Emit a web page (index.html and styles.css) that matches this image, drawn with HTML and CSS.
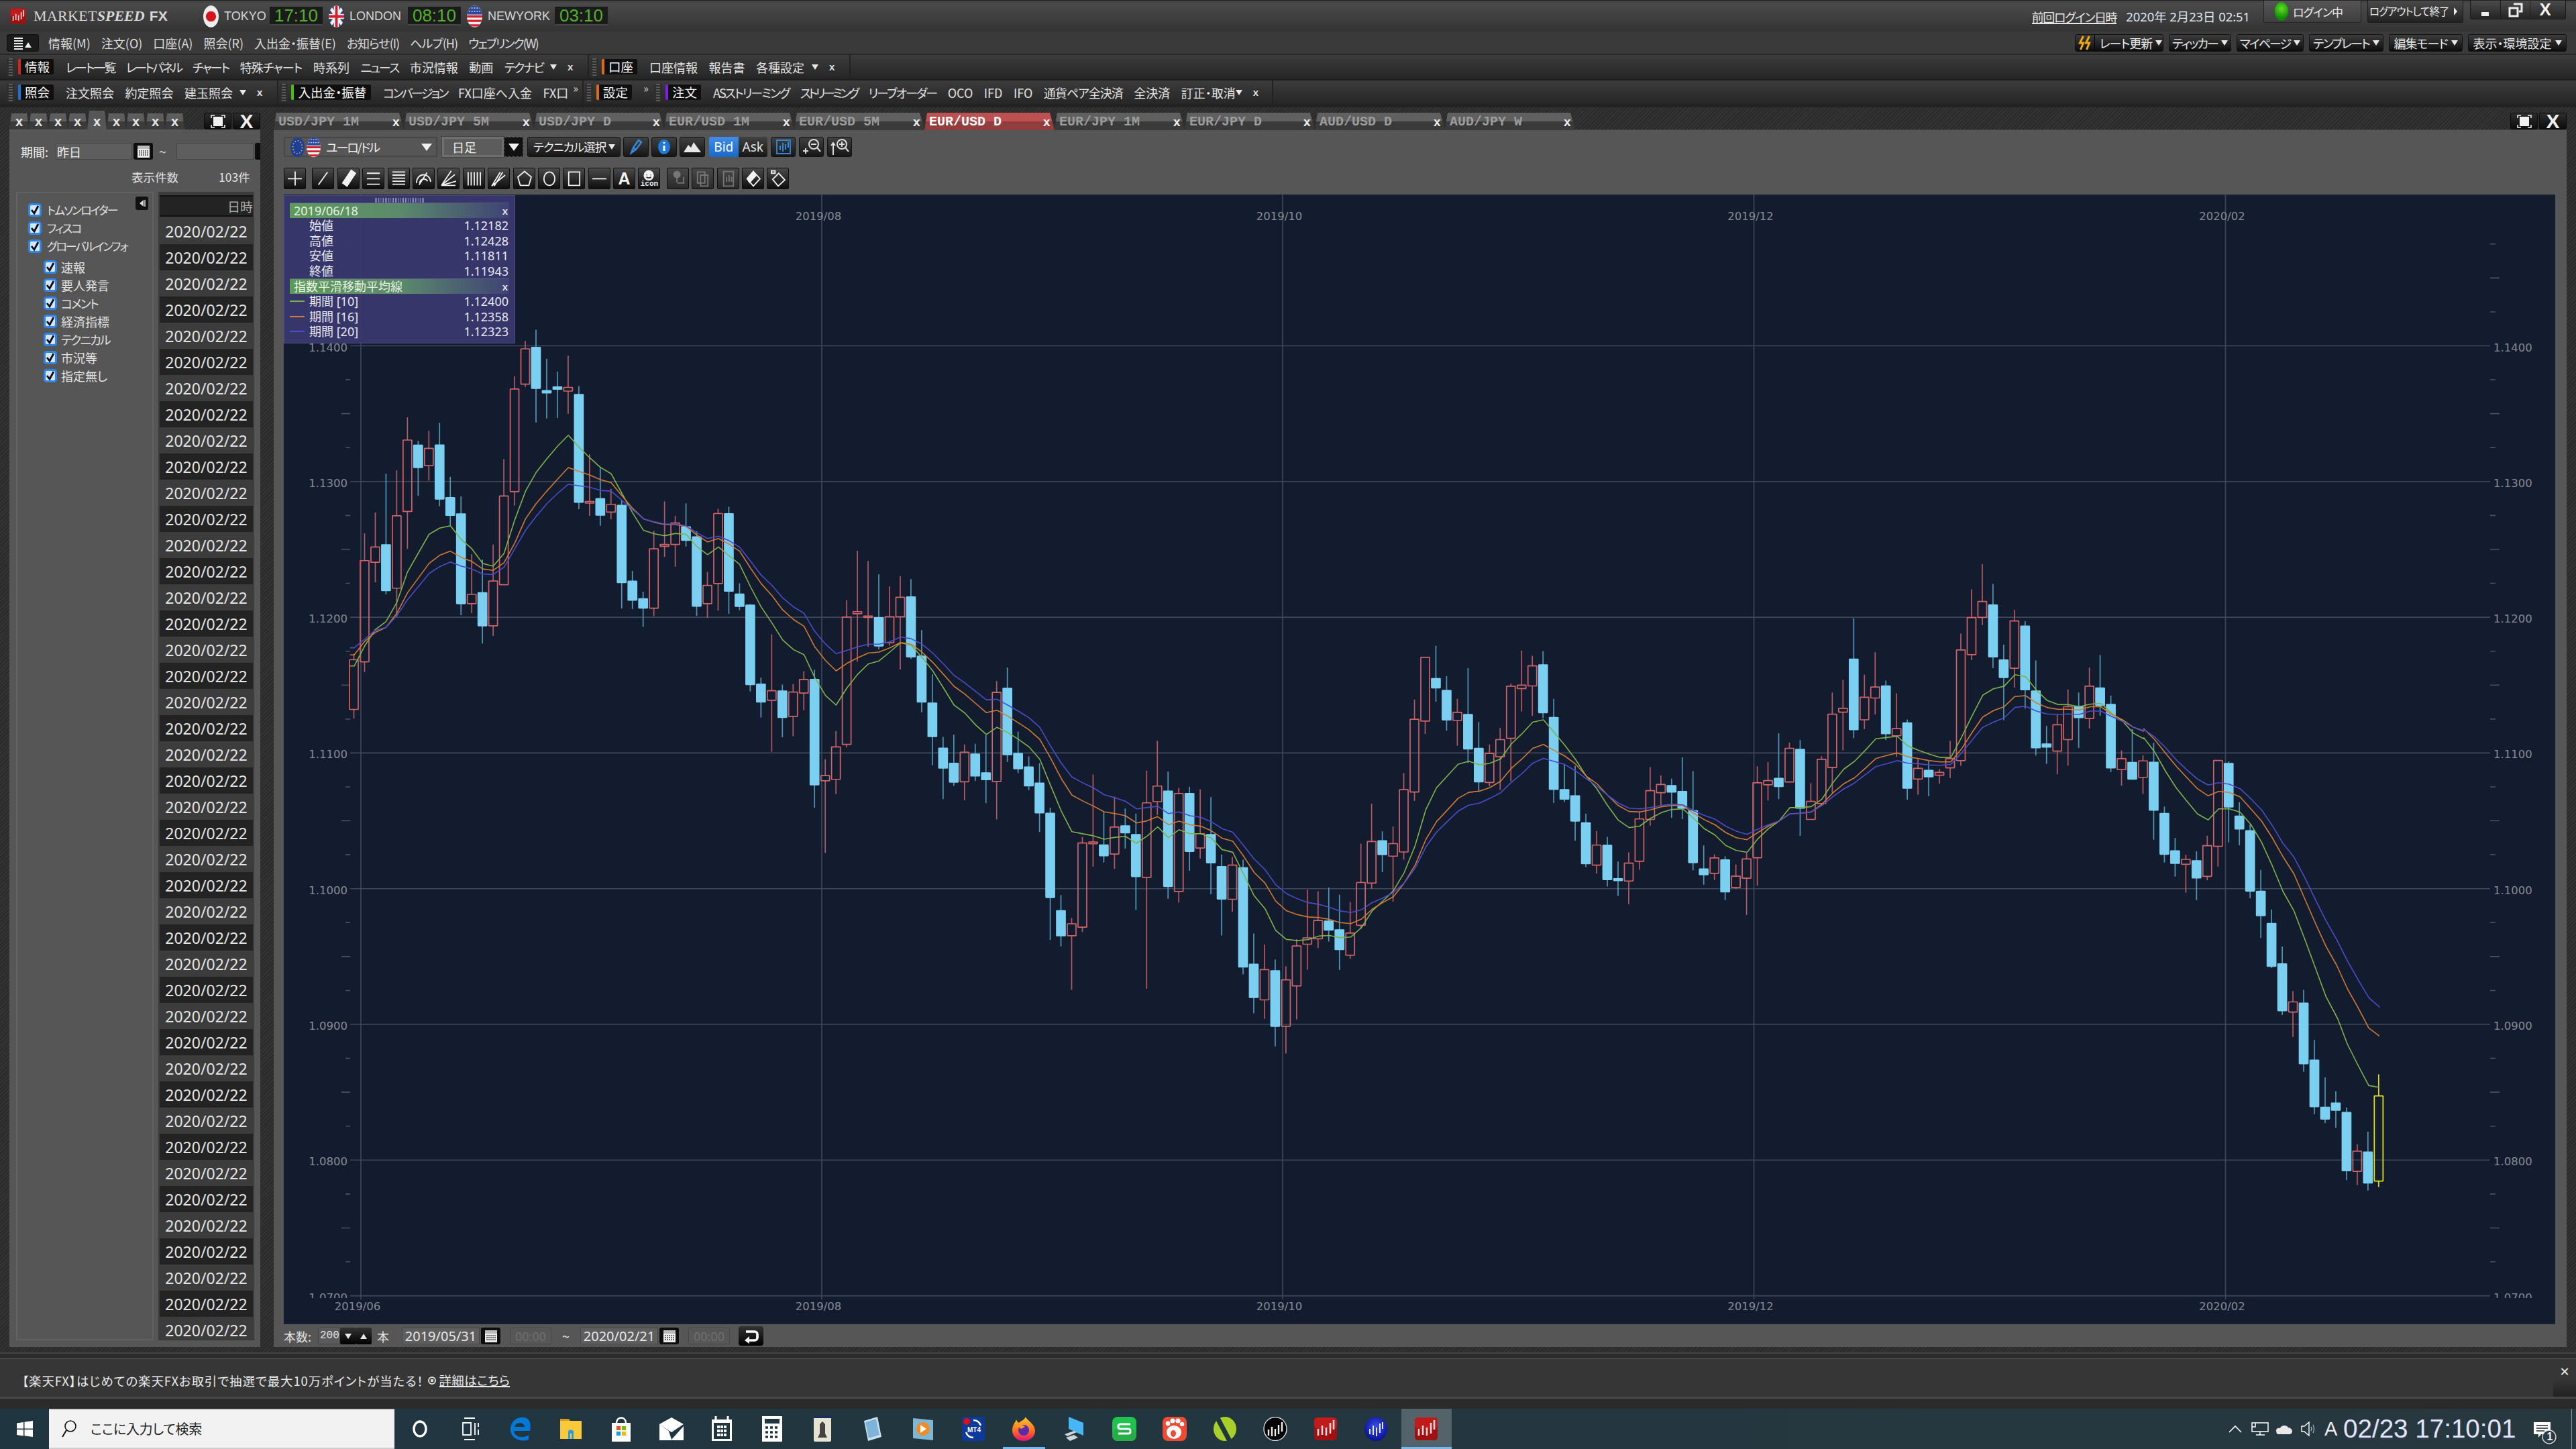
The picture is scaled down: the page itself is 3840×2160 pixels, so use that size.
FILE: index.html
```html
<!DOCTYPE html>
<html lang="ja">
<head>
<meta charset="utf-8">
<title>MARKETSPEED FX</title>
<link rel="stylesheet" href="styles.css">
</head>
<body>
<svg class="defs" width="0" height="0">
  <defs>
    <clipPath id="ov"><ellipse cx="12" cy="17" rx="12" ry="17"/></clipPath>
    <symbol id="f-jp" viewBox="0 0 24 34"><ellipse cx="12" cy="17" rx="12" ry="17" fill="#eee"/><circle cx="12" cy="17" r="8" fill="#d5141c"/></symbol>
    <symbol id="f-uk" viewBox="0 0 24 34"><g clip-path="url(#ov)"><rect width="24" height="34" fill="#243f8f"/><path d="M0 0L24 34M24 0L0 34" stroke="#eee" stroke-width="5"/><path d="M12 0V34M0 17H24" stroke="#eee" stroke-width="8"/><path d="M12 0V34M0 17H24" stroke="#d0202c" stroke-width="4"/></g></symbol>
    <symbol id="f-us" viewBox="0 0 24 34"><g clip-path="url(#ov)"><rect width="24" height="34" fill="#eee"/><path d="M0 3H24M0 10H24M0 17H24M0 24H24M0 31H24" stroke="#d0202c" stroke-width="3.4"/><rect width="24" height="14" fill="#2c4a9c"/><path d="M3 4h18M3 9h18" stroke="#dde" stroke-width="1.5" stroke-dasharray="2 2"/></g></symbol>
    <symbol id="f-eu" viewBox="0 0 24 34"><ellipse cx="12" cy="17" rx="12" ry="17" fill="#1d3f96"/><ellipse cx="12" cy="17" rx="8" ry="11" fill="none" stroke="#e8c820" stroke-width="2" stroke-dasharray="1.6 3.4"/></symbol>
    <symbol id="chk" viewBox="0 0 20 20"><rect x="1.5" y="1.5" width="17" height="17" rx="3" fill="#d3e6fa" stroke="#2f86e8" stroke-width="3"/><path d="M5 10l4 5 6-11" fill="none" stroke="#0a0a14" stroke-width="2.8"/></symbol>
    <symbol id="cal" viewBox="0 0 24 24"><rect x="3" y="3" width="18" height="18" fill="#eee"/><rect x="3" y="3" width="18" height="5" fill="#bbb"/><path d="M5 11h14M5 14h14M5 17h14" stroke="#444" stroke-width="1.6" stroke-dasharray="2 1"/></symbol>
    <symbol id="mx" viewBox="0 0 30 22"><path d="M5 6V2h5M20 2h5v4M25 16v4h-5M10 20H5v-4" fill="none" stroke="#eee" stroke-width="1.6"/><rect x="8" y="4" width="14" height="14" fill="#f0f0f0"/></symbol>
    <symbol id="rc" viewBox="0 0 36 36"><rect x="1" y="1" width="34" height="34" rx="5" fill="#a01010"/><rect x="1" y="1" width="34" height="17" rx="5" fill="#c01a1a"/><path d="M7 18v10M13 13v14M19 16v12M25 9v16M30 5v14" stroke="#f2d8d8" stroke-width="2.6"/></symbol>
  </defs>
</svg>

<div class="app">
  <header class="titlebar">
    <svg class="logo" viewBox="0 0 36 36"><use href="#rc"/></svg>
    <div class="brand"><span>MARKET</span><em>SPEED</em><b>FX</b></div>
    <svg class="flag first"><use href="#f-jp"/></svg><span class="city w-t">TOKYO</span><span class="lcd">17:10</span>
    <svg class="flag"><use href="#f-uk"/></svg><span class="city w-l">LONDON</span><span class="lcd">08:10</span>
    <svg class="flag"><use href="#f-us"/></svg><span class="city w-n">NEWYORK</span><span class="lcd">03:10</span>
    <div class="title-right">
      <a class="last-login">前回ログイン日時</a>
      <span class="last-date">2020年 2月23日 02:51</span>
      <div class="login-pill"><i class="led"></i><span>ログイン中</span></div>
      <div class="logout"><span>ログアウトして終了</span><i class="arr-r"></i></div>
      <div class="winbtns">
        <span class="wb"><i class="wb-min"></i></span>
        <span class="wb"><svg width="24" height="24" viewBox="0 0 24 24"><path d="M9 3h12v11h-4M3 9h12v12H3z" fill="none" stroke="#eee" stroke-width="3"/></svg></span>
        <span class="wb wb-x">X</span>
      </div>
    </div>
  </header>

  <nav class="menubar">
    <span class="menu-ico"><svg width="30" height="20" viewBox="0 0 30 20"><path d="M2 3h13M2 7h13M2 11h13M2 15h13M2 19h13" stroke="#eee" stroke-width="1.8"/><path d="M18 17l5-8 5 8z" fill="#eee"/></svg></span>
    <span class="mi">情報(M)</span><span class="mi">注文(O)</span><span class="mi">口座(A)</span><span class="mi">照会(R)</span><span class="mi">入出金・振替(E)</span><span class="mi k1">お知らせ(I)</span><span class="mi k1">ヘルプ(H)</span><span class="mi k2">ウェブリンク(W)</span>
    <div class="menu-right">
      <span class="rbtn"><svg class="bolt" width="22" height="24" viewBox="0 0 22 24"><path d="M8 2L3 12l5 0-4 10M17 2l-5 10 5 0-4 10" fill="none" stroke="#f0a814" stroke-width="3"/></svg><span class="k1">レート更新</span><i class="tri"></i></span>
      <span class="rbtn"><span class="k2">ティッカー</span><i class="tri"></i></span>
      <span class="rbtn"><span class="k2">マイページ</span><i class="tri"></i></span>
      <span class="rbtn"><span class="k2">テンプレート</span><i class="tri"></i></span>
      <span class="rbtn"><span class="k1">編集モード</span><i class="tri"></i></span>
      <span class="rbtn"><span>表示・環境設定</span><i class="tri"></i></span>
    </div>
  </nav>

  <div class="toolbar tb1">
    <div class="tg g-info"><i class="grip"></i><span class="badge red">情報</span><div class="items"><span class="k2">レート一覧</span><span class="k3">レートパネル</span><span class="k2">チャート</span><span class="k1">特殊チャート</span><span>時系列</span><span class="k2">ニュース</span><span>市況情報</span><span>動画</span><span class="k2">テクナビ</span></div><i class="tri end"></i><span class="tx">x</span></div>
    <div class="tg g-acct"><i class="grip"></i><span class="badge orange">口座</span><div class="items"><span>口座情報</span><span>報告書</span><span>各種設定</span></div><i class="tri end"></i><span class="tx">x</span></div>
  </div>
  <div class="toolbar tb2">
    <div class="tg g-q"><i class="grip"></i><span class="badge blue">照会</span><div class="items"><span>注文照会</span><span>約定照会</span><span>建玉照会</span></div><i class="tri end"></i><span class="tx">x</span></div>
    <div class="tg g-dep"><i class="grip"></i><span class="badge green wide">入出金・振替</span><div class="items"><span class="k3">コンバージョン</span><span>FX口座へ入金</span><span>FX口</span></div><span class="more">»</span></div>
    <div class="tg g-set"><i class="grip"></i><span class="badge orange">設定</span><span class="more">»</span></div>
    <div class="tg g-ord"><i class="grip"></i><span class="badge purple">注文</span><div class="items"><span class="k2">ASストリーミング</span><span class="k4">ストリーミング</span><span class="k2">リーブオーダー</span><span>OCO</span><span>IFD</span><span>IFO</span><span class="k1">通貨ペア全決済</span><span>全決済</span><span>訂正・取消</span></div><i class="tri end"></i><span class="tx">x</span></div>
  </div>

  <main class="workspace">
    <section class="left">
      <div class="tabrow">
        <div class="mtabs"><span>x</span><span>x</span><span>x</span><span>x</span><span class="on">x</span><span>x</span><span>x</span><span>x</span><span>x</span></div>
        <div class="wctl"><span><svg width="30" height="22"><use href="#mx"/></svg></span><span class="wctl-x">X</span></div>
      </div>
      <div class="lbody">
        <div class="period">
          <label>期間:</label><span class="input i1">昨日</span><span class="calbtn"><svg width="24" height="24"><use href="#cal"/></svg></span><span class="tilde">~</span><span class="input i2"></span><span class="calbtn cut"></span>
        </div>
        <div class="count"><span>表示件数</span><span class="num">103件</span></div>
        <div class="split">
          <div class="filter">
            <span class="collapse"><svg width="14" height="14" viewBox="0 0 14 14"><path d="M9 2L3 7l6 5z" fill="#ddd"/><path d="M11 2v10" stroke="#ddd" stroke-width="1.5"/></svg></span>
            <div class="ck"><svg><use href="#chk"/></svg><span class="k2">トムソンロイター</span></div>
            <div class="ck"><svg><use href="#chk"/></svg><span class="k2">フィスコ</span></div>
            <div class="ck"><svg><use href="#chk"/></svg><span class="k2">グローバルインフォ</span></div>
            <div class="subtree">
              <div class="ck sub"><svg><use href="#chk"/></svg><span>速報</span></div>
              <div class="ck sub"><svg><use href="#chk"/></svg><span>要人発言</span></div>
              <div class="ck sub"><svg><use href="#chk"/></svg><span class="k2">コメント</span></div>
              <div class="ck sub"><svg><use href="#chk"/></svg><span>経済指標</span></div>
              <div class="ck sub"><svg><use href="#chk"/></svg><span class="k2">テクニカル</span></div>
              <div class="ck sub"><svg><use href="#chk"/></svg><span>市況等</span></div>
              <div class="ck sub"><svg><use href="#chk"/></svg><span>指定無し</span></div>
            </div>
          </div>
          <div class="dates">
            <div class="dh">日時</div>
            <div>2020/02/22</div><div>2020/02/22</div><div>2020/02/22</div><div>2020/02/22</div><div>2020/02/22</div><div>2020/02/22</div><div>2020/02/22</div><div>2020/02/22</div><div>2020/02/22</div><div>2020/02/22</div><div>2020/02/22</div><div>2020/02/22</div><div>2020/02/22</div><div>2020/02/22</div><div>2020/02/22</div><div>2020/02/22</div><div>2020/02/22</div><div>2020/02/22</div><div>2020/02/22</div><div>2020/02/22</div><div>2020/02/22</div><div>2020/02/22</div><div>2020/02/22</div><div>2020/02/22</div><div>2020/02/22</div><div>2020/02/22</div><div>2020/02/22</div><div>2020/02/22</div><div>2020/02/22</div><div>2020/02/22</div><div>2020/02/22</div><div>2020/02/22</div><div>2020/02/22</div><div>2020/02/22</div><div>2020/02/22</div><div>2020/02/22</div><div>2020/02/22</div><div>2020/02/22</div><div>2020/02/22</div><div>2020/02/22</div><div>2020/02/22</div><div>2020/02/22</div><div>2020/02/22</div>
          </div>
        </div>
      </div>
    </section>

    <section class="right">
      <div class="tabrow">
        <div class="ctabs">
          <span><b>USD/JPY 1M</b><i>x</i></span><span><b>USD/JPY 5M</b><i>x</i></span><span><b>USD/JPY D</b><i>x</i></span><span><b>EUR/USD 1M</b><i>x</i></span><span><b>EUR/USD 5M</b><i>x</i></span><span class="on"><b>EUR/USD D</b><i>x</i></span><span><b>EUR/JPY 1M</b><i>x</i></span><span><b>EUR/JPY D</b><i>x</i></span><span><b>AUD/USD D</b><i>x</i></span><span><b>AUD/JPY W</b><i>x</i></span>
        </div>
        <div class="wctl"><span><svg width="30" height="22"><use href="#mx"/></svg></span><span class="wctl-x">X</span></div>
      </div>
      <div class="rbody">
        <div class="ctool">
          <div class="pair"><svg class="pf"><use href="#f-eu"/></svg><svg class="pf"><use href="#f-us"/></svg><span class="k2">ユーロ/ドル</span><i class="tri big"></i></div>
          <div class="span-sel"><span>日足</span></div><span class="span-dd"><i class="tri big"></i></span>
          <div class="tech"><span class="k1">テクニカル選択</span><i class="tri"></i></div>
          <span class="bt"><svg width="24" height="26" viewBox="0 0 24 26"><path d="M5 22l3-8L16 3l4 3-8 11zM8 14l4 3" fill="none" stroke="#3a8be0" stroke-width="2.4"/></svg></span>
          <span class="bt"><svg width="24" height="26" viewBox="0 0 24 26"><ellipse cx="12" cy="13" rx="9" ry="11" fill="#1d78d8"/><path d="M12 11v8M12 6v2" stroke="#fff" stroke-width="3"/></svg></span>
          <span class="bt"><svg width="30" height="24" viewBox="0 0 30 24"><path d="M2 20L9 9l4 4 4-8 5 7 6 8z" fill="#e8e8e8"/></svg></span>
          <span class="seg"><span class="bid">Bid</span><span class="ask">Ask</span></span>
          <span class="bt nar"><svg width="26" height="26" viewBox="0 0 26 26"><path d="M2 3h22M2 23h22M3 3v20M23 3v20" stroke="#2d8ae0" stroke-width="1.8" fill="none"/><path d="M8 18V11M12 20V7M16 17V9M20 14V5" stroke="#2d8ae0" stroke-width="2"/></svg></span>
          <span class="bt nar"><svg width="30" height="28" viewBox="0 0 30 28"><circle cx="18" cy="10" r="7" fill="none" stroke="#ddd" stroke-width="2"/><path d="M23 15l5 6M14 10h8M2 20h8M6 16v8" stroke="#ddd" stroke-width="2"/></svg></span>
          <span class="bt nar"><svg width="30" height="28" viewBox="0 0 30 28"><circle cx="18" cy="10" r="7" fill="none" stroke="#ddd" stroke-width="2"/><path d="M23 15l5 6M14 10h8M18 6v8M5 8v18M2 12l3-4 3 4" stroke="#ddd" stroke-width="2" fill="none"/></svg></span>
        </div>
        <div class="tools">
          <span class="tool"><svg viewBox="0 0 33 33"><path d="M17 5V28M5 17H28"/></svg></span>
          <span class="tool gapl"><svg viewBox="0 0 33 33"><path d="M9 27L24 6"/></svg></span>
          <span class="tool"><svg viewBox="0 0 33 33"><path d="M21 3l7 5-14 21-7-5z" class="f"/></svg></span>
          <span class="tool"><svg viewBox="0 0 33 33"><path d="M6 8H27M6 17H27M6 26H27"/></svg></span>
          <span class="tool"><svg viewBox="0 0 33 33"><path d="M6 6H27M6 11H27M6 16H27M6 21H27M6 26H27"/></svg></span>
          <span class="tool"><svg viewBox="0 0 33 33"><path d="M5 24A11 12 0 0 1 28 22M10 24A7 7 0 0 1 23 21M9 27L22 7"/></svg></span>
          <span class="tool"><svg viewBox="0 0 33 33"><path d="M5 28H28M5 28L27 10M5 28L21 4M5 28L29 21"/></svg></span>
          <span class="tool"><svg viewBox="0 0 33 33"><path d="M7 6V28M12 6V28M17 6V28M22 6V28M27 6V28"/></svg></span>
          <span class="tool"><svg viewBox="0 0 33 33"><path d="M5 29L19 6M5 29L27 11M9 29L23 6"/></svg></span>
          <span class="tool"><svg viewBox="0 0 33 33"><path d="M17 5L28 14 24 28H10L6 14Z"/></svg></span>
          <span class="tool"><svg viewBox="0 0 33 33"><ellipse cx="17" cy="17" rx="9" ry="11"/></svg></span>
          <span class="tool"><svg viewBox="0 0 33 33"><path d="M8 6H26V28H8Z"/></svg></span>
          <span class="tool"><svg viewBox="0 0 33 33"><path d="M5 17H28"/></svg></span>
          <span class="tool tool-a">A</span>
          <span class="tool tool-ic"><svg viewBox="0 0 33 20"><circle cx="16" cy="10" r="8" class="f"/><path d="M12 9h1M19 9h1M12 13q4 3 8 0" class="d"/></svg><small>icon</small></span>
          <span class="tool gapl dim"><svg viewBox="0 0 33 33"><circle cx="15" cy="10" r="5" class="f"/><path d="M15 15v8M26 14v10H16"/></svg></span>
          <span class="tool dim"><svg viewBox="0 0 33 33"><path d="M8 6h12v18H8zM13 11h12v18H13z"/></svg></span>
          <span class="tool dim"><svg viewBox="0 0 33 33"><path d="M9 5h16v24H9zM14 14v8M18 11v11M22 14v8"/></svg></span>
          <span class="tool"><svg viewBox="0 0 33 33"><path d="M17 5L28 17 17 29 7 17Z"/><path d="M7 17L17 5 22 11 11 23z" class="f"/></svg></span>
          <span class="tool"><svg viewBox="0 0 33 33"><path d="M18 8L28 19 17 29 8 18ZM6 4H12V8H6Z"/></svg></span>
        </div>

        <div class="chart">
          <svg id="chartSvg" class="chart-svg" viewBox="423 291 3386 1684" width="3386" height="1684"></svg>
          <div class="legend">
            <div class="lg-grip"></div>
            <div class="lg-head"><span>2019/06/18</span><i>x</i></div>
            <div class="lg-row"><i class="sw"></i><span>始値</span><b>1.12182</b></div>
            <div class="lg-row"><i class="sw"></i><span>高値</span><b>1.12428</b></div>
            <div class="lg-row"><i class="sw"></i><span>安値</span><b>1.11811</b></div>
            <div class="lg-row"><i class="sw"></i><span>終値</span><b>1.11943</b></div>
            <div class="lg-head"><span>指数平滑移動平均線</span><i>x</i></div>
            <div class="lg-row"><i class="sw g"></i><span>期間 [10]</span><b>1.12400</b></div>
            <div class="lg-row"><i class="sw o"></i><span>期間 [16]</span><b>1.12358</b></div>
            <div class="lg-row"><i class="sw b"></i><span>期間 [20]</span><b>1.12323</b></div>
          </div>
        </div>

        <div class="cfoot">
          <span class="cf-l">本数:</span>
          <span class="cf-n">200</span><span class="cf-ud"><i class="tri"></i></span><span class="cf-ud"><i class="tri up"></i></span>
          <span class="cf-h">本</span>
          <span class="cf-d">2019/05/31</span><span class="calbtn sm"><svg width="24" height="24"><use href="#cal"/></svg></span>
          <span class="cf-t">00:00</span>
          <span class="cf-til">~</span>
          <span class="cf-d">2020/02/21</span><span class="calbtn sm"><svg width="24" height="24"><use href="#cal"/></svg></span>
          <span class="cf-t">00:00</span>
          <span class="cf-back"><svg width="26" height="26" viewBox="0 0 26 26"><path d="M5 6h13a4 4 0 0 1 4 4v5a4 4 0 0 1-4 4H7" fill="none" stroke="#fff" stroke-width="3.6"/><path d="M10 13l-7 6 7 5z" fill="#fff"/></svg></span>
        </div>
      </div>
    </section>
  </main>

  <footer class="news">
    <div class="news-main"><span class="news-txt">【楽天FX】はじめての楽天FXお取引で抽選で最大10万ポイントが当たる！</span><svg class="news-ico" width="14" height="16" viewBox="0 0 14 16"><rect x="2" y="3" width="10" height="10" rx="5" fill="none" stroke="#ddd" stroke-width="2"/><rect x="5" y="6" width="4" height="4" fill="#ddd"/></svg><a>詳細はこちら</a></div>
    <div class="news-x">✕</div>
  </footer>
</div>

<div class="taskbar">
  <span class="tb-start"><svg width="24" height="24" viewBox="0 0 24 24"><path d="M0 3.4L10 2v9.5H0zM11.5 1.8L24 0v11.5H11.5zM0 13h10v9.5L0 21zM11.5 13H24v11l-12.5-1.8z" fill="#fff"/></svg></span>
  <label class="tb-search"><svg width="24" height="28" viewBox="0 0 24 28"><circle cx="14" cy="10" r="8" fill="none" stroke="#111" stroke-width="1.6"/><path d="M8 16L2 26" stroke="#111" stroke-width="2"/></svg><span>ここに入力して検索</span></label>
  <div class="tb-icons">
    <span class="ti"><svg width="26" height="30" viewBox="0 0 26 30"><ellipse cx="13" cy="15" rx="9" ry="11" fill="none" stroke="#fff" stroke-width="3.4"/></svg></span>
    <span class="ti"><svg width="30" height="34" viewBox="0 0 30 34"><path d="M6 1h16M6 33h16M4 8h12v18H4zM22 8v18M27 8v6M27 18v8" fill="none" stroke="#fff" stroke-width="1.8"/></svg></span>
    <span class="ti"><svg width="36" height="36" viewBox="0 0 36 36"><path d="M32 21H8c1 9 13 12 22 6v7C17 39 2 31 3 18 3 7 13-1 24 1c8 2 10 10 8 20zM9 15h15c0-7-13-8-15 0z" fill="#0078d7" fill-rule="evenodd"/></svg></span>
    <span class="ti"><svg width="34" height="34" viewBox="0 0 34 34"><path d="M1 2h12l3 3h17v27H1z" fill="#f9c93a"/><path d="M1 2h12l3 3H1z" fill="#d79a1c"/><path d="M13 32V20l4-2 4 2v12h-3v-8h-2v8z" fill="#2a9fe0"/></svg></span>
    <span class="ti"><svg width="34" height="38" viewBox="0 0 34 38"><path d="M3 10h28v28H3z" fill="#fff"/><path d="M10 10C10 0 24 0 24 10" fill="none" stroke="#fff" stroke-width="2.5"/><rect x="10" y="15" width="6" height="6" fill="#f25022"/><rect x="18" y="15" width="6" height="6" fill="#7fba00"/><rect x="10" y="23" width="6" height="6" fill="#00a4ef"/><rect x="18" y="23" width="6" height="6" fill="#ffb900"/></svg></span>
    <span class="ti"><svg width="36" height="34" viewBox="0 0 36 34"><path d="M0 10L18 0l18 10v24H0z" fill="#fff"/><path d="M0 10l18 12L36 10v3L18 33 14 20z" fill="#1f3540"/></svg></span>
    <span class="ti"><svg width="32" height="38" viewBox="0 0 32 38"><path d="M1 5h30v32H1z" fill="#fff"/><path d="M7 0v9M25 0v9" stroke="#fff" stroke-width="3"/><path d="M4 10h24v24H4z" fill="#1f3540"/><path d="M9 16h14M9 22h14M9 28h14" stroke="#fff" stroke-width="4" stroke-dasharray="4 1"/></svg></span>
    <span class="ti"><svg width="30" height="38" viewBox="0 0 30 38"><path d="M0 0h30v38H0z" fill="#fff"/><path d="M4 4h22v7H4z" fill="#1f3540"/><path d="M5 17h20M5 24h20M5 31h20" stroke="#1f3540" stroke-width="3.5" stroke-dasharray="4 3"/></svg></span>
    <span class="ti"><svg width="26" height="38" viewBox="0 0 26 38"><rect width="26" height="38" rx="2" fill="#e5e3d2"/><rect width="26" height="3" fill="#1b2a66"/><path d="M9 12l4-4 4 4v14l3 6H6l3-6z" fill="#444"/></svg></span>
    <span class="ti"><svg width="30" height="36" viewBox="0 0 30 36"><path d="M2 6L22 0l6 30-20 6z" fill="#c9e2f2"/><path d="M4 8L20 3l5 24-16 5z" fill="#7fb4d8"/></svg></span>
    <span class="ti"><svg width="32" height="36" viewBox="0 0 32 36"><path d="M1 2l30 3v30L1 32z" fill="#7fb7d3"/><circle cx="16" cy="18" r="10" fill="#f28a28"/><path d="M12 12l9 6-9 6z" fill="#fff"/></svg></span>
    <span class="ti"><svg width="34" height="36" viewBox="0 0 34 36"><rect width="34" height="36" fill="#0b3a9a"/><path d="M17 5a12 12 0 0 1 11 8M17 31A12 12 0 0 1 6 23" fill="none" stroke="#fff" stroke-width="2.5"/><circle cx="7" cy="7" r="5" fill="#d11"/><text x="8" y="23" class="mt4">MT4</text></svg></span>
    <span class="ti"><svg width="34" height="36" viewBox="0 0 34 36"><defs><linearGradient id="ffx" x1="0" y1="0" x2="0" y2="1"><stop offset="0" stop-color="#ffcc30"/><stop offset=".6" stop-color="#ff6a20"/><stop offset="1" stop-color="#e5107a"/></linearGradient></defs><path d="M17 36C6 36 0 28 0 20 0 12 5 8 6 4c1 3 2 4 4 5 3-3 8-4 10-9 0 4 14 10 14 21 0 8-7 15-17 15z" fill="url(#ffx)"/><circle cx="17" cy="20" r="8" fill="#5b2ca8"/><path d="M8 14c4-3 9-2 11 1l-6 3z" fill="#ff9a2a"/></svg></span>
    <span class="ti"><svg width="32" height="36" viewBox="0 0 32 36"><path d="M8 0l22 9v19L8 18z" fill="#48b6f5"/><path d="M2 26l14-5 4 2-14 6zM4 31l12-4 6 4-12 5z" fill="#cfd6da"/></svg></span>
    <span class="ti"><svg width="36" height="36" viewBox="0 0 36 36"><rect width="36" height="36" rx="8" fill="#1fc24d"/><rect y="18" width="36" height="18" rx="8" fill="#27ad47"/><path d="M27 11H12q-3 0-3 3v1q0 3 3 3h12q3 0 3 3v1q0 3-3 3H9" fill="none" stroke="#fff" stroke-width="3"/></svg></span>
    <span class="ti"><svg width="36" height="36" viewBox="0 0 36 36"><rect width="36" height="36" rx="8" fill="#f14a33"/><circle cx="8" cy="10" r="3.4" fill="#fff"/><circle cx="15" cy="6" r="3.6" fill="#fff"/><circle cx="23" cy="6" r="3.6" fill="#fff"/><circle cx="29" cy="11" r="3.2" fill="#fff"/><ellipse cx="17" cy="23" rx="11" ry="10" fill="#fff"/><ellipse cx="16" cy="25" rx="4" ry="5" fill="#f14a33"/></svg></span>
    <span class="ti"><svg width="34" height="36" viewBox="0 0 34 36"><ellipse cx="17" cy="18" rx="17" ry="18" fill="#a8d028"/><path d="M9 0L28 36h-8L4 6z" fill="#1f3540"/></svg></span>
    <span class="ti"><svg width="36" height="36" viewBox="0 0 36 36"><ellipse cx="18" cy="18" rx="17" ry="17.5" fill="#000" stroke="#ddd" stroke-width="1.4"/><path d="M8 19v9M13 15v14M18 18v11M23 12v14M28 8v14" stroke="#f0f0f0" stroke-width="2.4"/></svg></span>
    <span class="ti"><svg width="36" height="36" viewBox="0 0 36 36"><use href="#rc"/></svg></span>
    <span class="ti"><svg width="34" height="36" viewBox="0 0 34 36"><defs><radialGradient id="bb" cx=".5" cy=".4" r=".6"><stop offset="0" stop-color="#3a50e0"/><stop offset="1" stop-color="#06109a"/></radialGradient></defs><ellipse cx="17" cy="18" rx="17" ry="18" fill="url(#bb)"/><path d="M8 18v8M13 13v14M18 16v13M23 10v14M27 8v10" stroke="#dfe6ff" stroke-width="2"/></svg></span>
    <span class="ti active"><svg width="36" height="36" viewBox="0 0 36 36"><use href="#rc"/></svg></span>
  </div>
  <div class="tray">
    <svg class="t-up" width="20" height="12" viewBox="0 0 20 12"><path d="M1 11L10 2l9 9" fill="none" stroke="#fff" stroke-width="1.6"/></svg>
    <svg class="t-net" width="26" height="24" viewBox="0 0 26 24"><path d="M6 3h19v13H1V3h5v6H1M13 16v5M7 21h13" fill="none" stroke="#fff" stroke-width="1.5"/></svg>
    <svg class="t-cloud" width="26" height="18" viewBox="0 0 26 18"><path d="M1 11c0-3 4-4 6-3 1-4 9-6 12-1 3 0 6 3 6 5s-1 5-4 5H4c-2 0-3-3-3-6z" fill="#e8e8e8"/></svg>
    <svg class="t-vol" width="24" height="24" viewBox="0 0 24 24"><path d="M1 8h4l7-6v20l-7-6H1z" fill="none" stroke="#fff" stroke-width="1.4"/><path d="M15 9q2 3 0 6M18 6q3 6 0 12" fill="none" stroke="#9ab" stroke-width="1.4"/></svg>
    <span class="t-ime">A</span>
    <span class="t-clock">02/23 17:10:01</span>
    <span class="t-note"><svg width="36" height="36" viewBox="0 0 36 36"><path d="M1 3h25v18H12l-4 5v-5H1z" fill="#fff"/><path d="M5 8h17M5 12h17M5 16h12" stroke="#223" stroke-width="1.4"/><circle cx="24" cy="25" r="10" fill="#2a3b44" stroke="#ddd" stroke-width="1.4"/></svg><b>1</b></span>
    <i class="t-desk"></i>
  </div>
</div>
<script src="chart.js"></script>
</body>
</html>
```

FILE: styles.css
```css
*{box-sizing:border-box}
html,body{margin:0;padding:0}
body{width:3840px;height:2160px;overflow:hidden;background:#2a2a2a;color:#ddd;display:flex;flex-direction:column;font-family:"Noto Sans CJK JP","Noto Sans",sans-serif;font-size:18px;font-feature-settings:"palt";line-height:1}
.defs{display:block;flex:none}
i{font-style:normal}
.k1{letter-spacing:-1px}.k2{letter-spacing:-2px}.k3{letter-spacing:-2.7px}.k4{letter-spacing:-3.5px}
.app{height:2100px;display:flex;flex-direction:column;flex:none;background:#2b2b2b}

/* title bar */
.titlebar{height:47px;flex:none;display:flex;align-items:center;padding-left:15px;background:linear-gradient(#3e3e3e 0,#4a4a4a 4px,#333 100%);border-top:1px solid #222}
.logo{width:24px;height:26px;flex:none}
.brand{margin-left:11px;width:205px;font-family:"Liberation Serif",serif;font-size:22px;color:#d8d8d8;display:flex;letter-spacing:.3px}
.brand em{font-weight:700;letter-spacing:0;transform-origin:left}
.brand b{font-family:"Liberation Sans",sans-serif;margin-left:7px;font-size:21px}
.flag{width:23px;height:33px;flex:none;margin-left:9px}
.flag.first{margin-left:48px}
.city{font-family:"Liberation Sans",sans-serif;font-size:18px;color:#d6d6d6;margin-left:8px}
.w-t{width:68px}.w-l{width:87px}.w-n{width:100px}
.lcd{width:79px;height:28px;background:#1b1b1b;border-bottom:2px solid #444;color:#52b02a;font-family:"Liberation Sans",sans-serif;font-size:26px;display:flex;align-items:center;justify-content:center}
.title-right{margin-left:auto;display:flex;align-items:flex-start;height:100%;padding-right:15px}
.last-login{color:#e6e6e6;font-size:18px;margin-top:15px;border-bottom:2px solid #e6e6e6;letter-spacing:-1.4px}
.last-date{margin-left:14px;margin-top:15px;color:#dfe6f2;font-family:"Noto Sans","Noto Sans CJK JP",sans-serif;font-size:18.5px;letter-spacing:-.1px}
.login-pill{margin-left:20px;width:146px;height:33px;background:linear-gradient(#555,#3f3f3f);border-radius:0 0 3px 3px;border:1px solid #222;border-top:0;display:flex;align-items:center;padding-left:16px;gap:7px;color:#eee;font-size:17px;letter-spacing:-1px}
.led{width:20px;height:28px;border-radius:50%;background:radial-gradient(circle at 50% 35%,#5fe020,#0c8a06 70%);flex:none}
.logout{margin-left:9px;width:143px;height:33px;background:linear-gradient(#4a4a4a,#222);border:1px solid #1a1a1a;border-top:0;border-radius:0 0 3px 3px;display:flex;align-items:center;padding-left:2px;font-size:15.5px;color:#eee;white-space:nowrap;letter-spacing:-1px}
.logout span{width:118px;text-align:center}
.arr-r{width:0;height:0;border-left:5px solid #eee;border-top:6px solid transparent;border-bottom:6px solid transparent;margin-left:8px}
.winbtns{margin-left:10px;width:143px;height:28px;display:flex;padding-right:8px;background:linear-gradient(#4a4a4a,#242424);border:1px solid #1a1a1a;border-top:0;border-radius:0 0 3px 3px}
.wb{flex:1;display:flex;align-items:center;justify-content:center;border-left:1px solid #1d1d1d;color:#f0f0f0;font:700 26px "Liberation Sans",sans-serif}
.wb:first-child{border-left:0}
.wb-min{width:11px;height:6px;background:#eee;margin-top:12px}

/* menu bar */
.menubar{height:35px;flex:none;display:flex;align-items:center;background:#3a3a3a;padding-left:10px;border-bottom:2px solid #262626}
.menu-ico{width:48px;height:26px;background:#1b1b1b;border:1px solid #0f0f0f;border-radius:3px;display:flex;align-items:center;justify-content:center;margin-right:14px}
.mi{margin-right:16px;color:#dcdcdc;white-space:nowrap}
.menu-right{margin-left:auto;display:flex;gap:8px;padding-right:14px}
.rbtn{height:26px;background:linear-gradient(#3c3c3c,#0d0d0d);border:1px solid #111;border-radius:3px;display:flex;align-items:center;justify-content:center;gap:5px;color:#e8e8e8;white-space:nowrap}
.rbtn:nth-child(1){width:132px}.rbtn:nth-child(2){width:93px}.rbtn:nth-child(3){width:100px}.rbtn:nth-child(4){width:111px}.rbtn:nth-child(5){width:110px}.rbtn:nth-child(6){width:147px}
.bolt{border-right:1px solid #000;margin-right:2px;width:28px}
.tri{width:0;height:0;border-left:5px solid transparent;border-right:5px solid transparent;border-top:8px solid #e8e8e8;display:inline-block;flex:none}
.tri.up{border-top:0;border-bottom:8px solid #e8e8e8}
.tri.big{border-left-width:8px;border-right-width:8px;border-top-width:11px;border-top-color:#f0f0f0}

/* toolbars */
.toolbar{height:38px;flex:none;display:flex;padding-left:8px;background:linear-gradient(#3b3b3b,#262626);border-bottom:3px solid #1f1f1f;align-items:stretch}
.tb2{height:40px;border-bottom:5px solid #222}
.tg{display:flex;align-items:center;border-right:2px solid #222;padding-left:2px;flex:none}
.g-info{width:870px}.g-acct{width:390px}
.g-q{width:407px}.g-dep{width:455px}.g-set{width:103px;border-right:0}.g-ord{width:925px}
.grip{width:12px;height:26px;flex:none;background:repeating-linear-gradient(#5b5b5b 0 2px,#2c2c2c 2px 4px);margin-right:5px;border-left:3px solid #2f2f2f;border-right:3px solid #2f2f2f}
.badge{height:23px;width:53px;background:#0f0f0f;color:#f5f5f5;display:flex;align-items:center;justify-content:center;border-left:4px solid;border-radius:2px;flex:none;font-size:18.5px}
.badge.wide{width:119px}
.red{border-color:#d9221c}.orange{border-color:#df6a14}.blue{border-color:#1b71dc}.green{border-color:#47bd15}.purple{border-color:#7d1fe0}
.items{display:flex;gap:16.5px;margin-left:18px;white-space:nowrap;color:#e2e2e2}
.tri.end{margin-left:auto;margin-right:16px}
.tx{font:700 15px "Liberation Sans",sans-serif;color:#e0e0e0;margin-right:20px;width:10px}
.more{margin-left:auto;font-size:16px;color:#ccc;margin-right:6px;align-self:flex-start;margin-top:3px}

/* workspace */
.workspace{flex:none;height:1858px;display:flex;padding:8px 14px 8px 14px;gap:20px;background:repeating-linear-gradient(135deg,#343434 0 2px,#2a2a2a 2px 4px);border-bottom:2px solid #454545}
.left{width:374px;display:flex;flex-direction:column;flex:none}
.right{flex:1;display:flex;flex-direction:column;min-width:0}
.tabrow{height:25px;display:flex;flex:none;position:relative}
.mtabs{display:flex;align-self:flex-end;height:24px}
.mtabs span{width:29px;background:linear-gradient(#5d5d5d 0 50%,#3b3b3b 50%);clip-path:polygon(3px 0,calc(100% - 3px) 0,100% 100%,0 100%);display:flex;align-items:center;justify-content:center;font:700 20px "Liberation Sans",sans-serif;color:#e8e8e8}
.mtabs .on{background:#565656;height:28px;margin-top:-4px;padding-top:4px}
.wctl{margin-left:auto;display:flex;height:25px;gap:2px}
.wctl span{width:41px;background:linear-gradient(#2c2c2c,#0d0d0d);border:1px solid #0a0a0a;border-radius:3px;display:flex;align-items:center;justify-content:center}
.wctl-x{font:700 30px "Liberation Sans",sans-serif;color:#f0f0f0}

.lbody{flex:1;background:#565656;display:flex;flex-direction:column;padding:20px 0 10px 0;min-height:0}
.period{display:flex;align-items:center;height:25px;padding-left:17px}
.period label{width:52px;color:#eee;flex:none}
.input{height:25px;background:#5e5e5e;border:1px solid #464646;display:flex;align-items:center;padding-left:1px;color:#eee;font-size:18px;flex:none}
.i1{width:114px}.i2{width:115px}
.calbtn{width:29px;height:25px;margin-left:2px;background:#0d0d0d;border-radius:3px;display:flex;align-items:center;justify-content:center;flex:none}
.calbtn.cut{width:8px;border-radius:3px 0 0 3px}
.tilde{width:27px;margin-left:8px;color:#ccc;font-size:20px;flex:none;padding-left:1px}
.count{display:flex;margin-top:17px;height:17px;align-items:center;padding-left:182px;color:#e2e2e2;font-size:17.5px}
.num{margin-left:60px}
.split{display:flex;margin-top:14px;padding-left:10px;flex:1;min-height:0;gap:7px}
.filter{width:205px;border:2px solid #626262;padding:11px 0 0 16px;position:relative;flex:none}
.collapse{position:absolute;left:176px;top:5px;width:19px;height:20px;background:#111;border-radius:3px;display:flex;align-items:center;justify-content:center}
.ck{display:flex;align-items:center;height:27px;gap:8px;color:#e2e2e2;white-space:nowrap;font-size:17px}
.ck svg{width:20px;height:20px;flex:none}
.subtree{margin-left:23px;margin-top:4px}
.sub{gap:6px;font-size:18px}
.dates{width:143px;flex:none;background:#3c3c3c;padding:5px 2px 0;overflow:hidden;font-family:"Noto Sans",sans-serif}
.dates div{height:39px;display:flex;align-items:center;justify-content:center;font-size:23px;color:#e4e4e4;font-feature-settings:normal;background:#3c3c3c;padding-top:2px}
.dates div:nth-child(odd){background:#232323}
.dates .dh{height:32px;margin-bottom:2px;background:linear-gradient(#3f3f3f,#1f1f1f);border:1px solid #111;border-width:2px 0;justify-content:flex-end;color:#aaa;font-family:"Noto Sans CJK JP",sans-serif;font-size:19px;padding:0}

/* chart tabs */
.ctabs{display:flex;align-self:flex-end;height:26px;margin-bottom:-1px}
.ctabs span{width:194px;display:flex;align-items:center;padding:2px 0 0 7px;background:linear-gradient(#606060 0 50%,#3a3a3a 50%);clip-path:polygon(4px 0,calc(100% - 7px) 0,100% 100%,0 100%);font-family:"Liberation Mono",monospace;font-size:20px;color:#9c9c9c;font-feature-settings:normal}
.ctabs b{font-weight:700;width:172px;white-space:nowrap}
.ctabs i{font:700 19px "Liberation Sans",sans-serif;color:#eee;margin-left:-2px}
.ctabs .on{background:linear-gradient(#bd5050 0 50%,#923e3e 50%);color:#fff}
.rbody{flex:1;background:#565656;border-top:1px solid #444;padding:10px 17px 5px 15px;display:flex;flex-direction:column;min-height:0}

.ctool{display:flex;height:30px;flex:none;align-items:stretch}
.pair{width:229px;background:#565656;border:2px solid #474747;display:flex;align-items:center;padding-left:8px;color:#eee;font-size:18px;gap:3px}
.pf{width:21px;height:31px;flex:none}
.pair span{margin-left:5px}
.pair .tri{margin-left:auto;margin-right:6px}
.span-sel{margin-left:7px;width:92px;border:3px solid #6f6f6f;outline:1px solid #454545;background:#5c5c5c;display:flex;align-items:center;padding-left:12px;color:#eee;font-size:18px}
.span-dd{width:29px;background:#111;display:flex;align-items:center;justify-content:center;border:1px dotted #666}
.tech{margin-left:6px;width:139px;background:linear-gradient(#404040,#161616);border-radius:3px;display:flex;align-items:center;padding-left:8px;gap:4px;color:#eee;white-space:nowrap;font-size:17.5px;border:1px solid #111}
.bt{width:38px;margin-left:4px;background:linear-gradient(#404040,#161616);border-radius:3px;border:1px solid #111;display:flex;align-items:center;justify-content:center}
.nar{width:37px;margin-left:5px}
.seg{margin-left:6px;display:flex;width:87px;border-radius:3px;overflow:hidden}
.seg span{flex:1;display:flex;align-items:center;justify-content:center;font:19px "Noto Sans",sans-serif}
.bid{background:linear-gradient(#3f8de8,#1b69c8);color:#fff}
.ask{background:linear-gradient(#404040,#161616);color:#e6e6e6}

.tools{display:flex;gap:4.4px;height:32px;margin-top:16px;flex:none}
.tool{width:33px;height:32px;flex:none;background:linear-gradient(#4a4a4a,#0e0e0e);border:1px solid #0d0d0d;border-radius:2px;display:flex;flex-direction:column;align-items:center;justify-content:center;color:#f2f2f2}
.tool svg{width:31px;height:30px;fill:none;stroke:#f2f2f2;stroke-width:2}
.tool .f{fill:#f2f2f2}
.tool .d{stroke:#222}
.gapl{margin-left:5px}
.dim{background:linear-gradient(#484848,#2a2a2a)}
.dim svg{stroke:#777}
.dim .f{fill:#777}
.tool-a{font:700 25px "Liberation Sans",sans-serif}
.tool-ic svg{height:17px}
.tool-ic small{font:700 11px "Liberation Mono",monospace;margin-top:-2px}

.chart{height:1684px;margin-top:8px;flex:none;position:relative;background:#131c2e}
.chart-svg{display:block}
.ax{font:16.5px "DejaVu Sans",sans-serif;fill:#868b93}
.mt4{font:700 10px "Liberation Sans",sans-serif;fill:#fff}
.legend{position:absolute;left:0;top:1px;width:345px;height:221px;background:rgba(57,55,110,.96);border:1px solid #4a4a84;padding:10px 8px 0 8px}
.lg-grip{position:absolute;left:135px;top:3px;width:74px;height:7px;background:repeating-linear-gradient(90deg,#8f8fb8 0 1px,transparent 1px 2.5px)}
.lg-head{height:23px;background:linear-gradient(90deg,#5e9a5c,#5c8a6c 50%,#3f4273);border-top:1px solid #5a5a8c;display:flex;align-items:center;justify-content:space-between;padding:0 2px 0 6px;color:#e8f2e0;font-size:18px;white-space:nowrap}
.lg-head span{font-family:"Noto Sans","Noto Sans CJK JP",sans-serif}
.lg-head i{font:700 15px "Liberation Sans",sans-serif;color:#e6e6ee}
.lg-row{height:22.5px;display:flex;align-items:center;color:#e8e8f0;font-size:18px;font-family:"Noto Sans","Noto Sans CJK JP",sans-serif}
.lg-row b{margin-left:auto;font-weight:400;font-size:18px;padding-right:1px;font-feature-settings:normal}
.sw{width:22px;height:2px;margin-right:7px;flex:none}
.sw.g{background:#7fb24a}.sw.o{background:#d17a36}.sw.b{background:#4a4ad8}

.cfoot{display:flex;margin-top:5px;height:25px;align-items:center;flex:none;color:#e2e2e2}
.cf-l{width:51px;font-size:18px}
.cf-n{width:33px;height:25px;background:#5a5a5a;border:1px solid #464646;font:16px "Liberation Mono",monospace;padding:2px 0 0 2px}
.cf-ud{width:23.5px;height:25px;background:linear-gradient(#333,#000);display:flex;align-items:center;justify-content:center;border-radius:2px}
.cf-h{margin-left:8px;width:37px}
.cf-d{width:116px;height:25px;background:#5e5e5e;border:1px solid #464646;display:flex;align-items:center;justify-content:center;font:20px "Noto Sans",sans-serif;color:#e8e8e8;font-feature-settings:normal}
.calbtn.sm{width:29px;margin-left:2px}
.cf-t{margin-left:14px;width:62px;height:25px;background:#575757;border:1px solid #474747;display:flex;align-items:center;justify-content:center;font:18px "Noto Sans",sans-serif;color:#6f6f6f}
.cf-til{width:43px;text-align:center;font-size:20px}
.cf-back{margin-left:13px;width:37px;height:29px;background:linear-gradient(#333,#000);border-radius:4px;display:flex;align-items:center;justify-content:center}

/* news */
.news{flex:none;height:61px;margin-top:6px;display:flex;background:#363636;border-top:2px solid #474747;border-bottom:3px solid #464646}
.news-main{flex:1;display:flex;align-items:center;padding-left:33px;color:#eaeaea;font-size:18.5px;white-space:nowrap;padding-top:8px}
.news-txt{letter-spacing:.85px}
.news-ico{margin:0 4px 0 5px}
.news-main a{border-bottom:2px solid #eaeaea;letter-spacing:.3px}
.news-x{width:34px;background:linear-gradient(#363636 50%,#222);color:#eee;font:700 18px "DejaVu Sans",sans-serif;display:flex;justify-content:center;padding-top:8px;flex:none}

/* taskbar */
.taskbar{height:60px;flex:none;display:flex;background:linear-gradient(90deg,#1f3540,#27383f)}
.tb-start{width:73px;display:flex;align-items:center;justify-content:center}
.tb-search{width:515px;background:#f2f2f2;border-top:1px solid #999;border-bottom:2px solid #cfcfcf;display:flex;align-items:center;padding-left:18px;gap:20px;color:#222;font-size:20px;letter-spacing:-.3px;white-space:nowrap;flex:none}
.tb-icons{display:flex;flex:none}
.ti{width:75.05px;height:60px;display:flex;align-items:center;justify-content:center;position:relative}
.ti:nth-child(13)::after,.ti.active::after{content:"";position:absolute;left:6px;right:6px;bottom:0;height:3px;background:#76b9ed}
.ti.active{background:#54636a}
.ti.active::after{left:0;right:0}
.tray{margin-left:auto;display:flex;align-items:center;position:relative;height:60px;flex:none;width:518px}
.t-net{margin-left:14px}
.t-cloud{margin-left:10px}
.t-vol{margin-left:12px}
.t-ime{margin-left:11px;font:400 29px "Liberation Sans",sans-serif;color:#eee;width:17px}
.t-clock{margin-left:11px;font:38.6px "Liberation Sans",sans-serif;color:#e3e5f6;text-shadow:1px 2px 2px #33405a;white-space:nowrap;width:258px}
.t-note{margin-left:25px;width:36px;height:36px;position:relative;margin-top:10px}
.t-note b{position:absolute;left:19px;top:16px;width:12px;text-align:center;font:700 16px "Liberation Sans",sans-serif;color:#eee}
.t-desk{position:absolute;right:6px;top:0;bottom:0;width:1px;background:#8a989e}
```

FILE: chart.js
```js
(function () {
  var svg = document.getElementById('chartSvg');
  var NS = 'http://www.w3.org/2000/svg';
  var X0 = 527.5, DX = 15.97;

  // candles: each value list is [high, bodyTop, bodyBottom, low] measured per crop
  var SEGS = [
    {o: 480, s: 2.904, d: 'R1440,1465,1680,1720 R918,1036,1474,1518 R828,977,1043,1130 B660,967,1166,1182 R645,842,1155,1280 R415,514,823,985 B518,536,633,756 R474,550,625,690 B440,535,769,800 B673,763,840,885 B758,834,1222,1272 R1008,1182,1222,1263 B1032,1175,1318,1395 R966,1124,1318,1362 R597,756,1140,1140 R238,293,737,798 R85,119,272,284 B36,113,290,438 B162,300,310,420 B218,284,294,418 R149,286,302,400 B280,317,783,813 R576,780,787,842 B630,768,839,885 R725,792,826,857 B775,797,1131,1243 B1080,1125,1207,1245 B1170,1201,1241,1323 R907,985,1242,1276 R780,966,974,1020 R842,873,966,1062 B788,890,948,975 B908,933,1233,1275 R1085,1143,1222,1284 R812,832,1135,1252 B802,833,1168,1266 B1134,1181,1234,1250'},
    {o: 700, s: 1.96, d: 'B395,398,630,650 B610,629,681,726 R483,648,676,826 B630,649,726,784 R628,652,723,781 R591,615,655,705 B587,615,923,990 R848,896,911,1122 R766,812,907,950 R383,433,805,814 R239,417,423,563 R269,430,434,520 B308,435,517,527 R343,432,508,516 R313,375,432,586 B322,374,549,555 B471,547,681,711 B600,684,782,866 B783,816,874,965 B776,860,915,926 R805,828,914,968 B803,833,897,912 B778,888,908,976 R620,653,913,1024 B580,641,835,856 B768,831,876,889 B840,871,926,939 B860,918,1005,1061 B990,1006,1252,1376 B1245,1291,1364,1395 R1312,1329,1364,1522 R1075,1093,1339,1353 R893,1090,1095,1162 B1003,1099,1130,1150'},
    {o: 900, s: 2.24, d: 'R646,748,838,887 B686,744,767,820 B703,773,913,1025 R560,667,916,1288 R460,611,663,707 B563,628,946,987 R617,636,963,1000 B613,636,829,894 R622,770,818,853 B648,773,867,972 B840,880,988,1110 R848,875,989,1031 B857,884,1215,1240 B1103,1206,1317,1370 R1140,1224,1325,1388 B1190,1228,1413,1480 R1213,1258,1413,1504 R1122,1145,1278,1390 R957,1118,1139,1224 R962,1060,1121,1152 B950,1062,1092,1130 B974,1091,1157,1225 R998,1102,1176,1188 R803,933,1076,1088 R670,796,935,954 B762,794,840,898 R746,803,845,997 R568,623,831,857 R322,388,631,661 R180,181,394,437 B143,252,283,329 B244,292,390,426 R320,365,392,476 B217,372,487,535 B397,485,597,628'},
    {o: 800, s: 2.613, d: 'R812,847,960,975 R748,793,860,990 R575,585,788,955 R447,581,594,683 R467,506,584,700 B449,502,688,710 B634,707,987,1040 B890,988,1025,1036 B895,1012,1110,1187 B1082,1117,1276,1290 R1150,1204,1282,1315 B1172,1205,1338,1365 B1268,1335,1342,1402 R1232,1274,1344,1434 R1075,1102,1267,1300 R900,992,1104,1128 R932,968,1000,1048 B945,972,997,1098 B862,995,1060,1103 B916,1070,1272,1302 B1205,1297,1319,1358 R1240,1254,1314,1340 B1248,1262,1386,1418 R1280,1325,1369,1375 R1235,1258,1333,1476 R897,961,1253,1362 R880,953,969,1030 B768,944,976,1025 R805,827,958,960 B795,831,1060,1168 R963,1034,1104,1104 R858,870,1042,1050 R610,694,902,1000 R560,671,686,835 B320,480,754,787 R540,628,716,752 R453,588,631,695 B563,584,770,795 R613,750,778,860 B715,728,982,1027 R865,905,947,1008 B878,913,938,1013 R908,921,932,965 R798,867,903,943 R380,444,875,895 R208,318,462,483 R110,255,317,347 B187,269,471,515 B423,483,551,717 R288,331,515,590 B332,351,599,672 B485,604,825,855 B740,810,822,888 R695,735,838,928 R598,665,793,895 B610,664,707,826 R512,585,711,750 B463,592,660,700 B622,656,903,920 R835,867,910,973 B752,882,947,950 R855,876,940,1005'},
    {o: 1000, s: 3, d: 'B325,412,626,758 B610,641,823,860 B750,808,864,923 R826,846,868,995 B810,852,929,1028 R740,785,922,940 R403,404,788,878 B408,417,612,770 B590,653,710,783 B690,718,988,1020 B893,989,1098,1198 B1070,1133,1324,1332'},
    {o: 1400, s: 2.063, d: 'B25,78,222,235 R162,195,226,303 B158,199,385,410 B312,374,517,540 B427,519,555,568 B470,506,528,582 B520,535,714,743 R633,654,716,758 B594,657,752,775 Y418,484,746,764'}
  ];

  // moving-average polylines in crop coordinates
  var LSEG = [
    {ox: 420, sx: 2.24, oy: 480, sy: 2.904,
      g: [228,1492,242,1492,277,1405,312,1335,348,1300,384,1218,420,1085,492,922,527,895,563,885,600,945,635,985,671,1048,706,1060,742,1005,778,860,814,735,849,655,885,595,921,540,957,493,993,545,1028,590,1064,632,1100,660,1136,745,1172,830,1208,905,1244,920,1279,928,1315,918,1350,922,1386,975,1422,1010,1458,977,1494,1015,1529,1052],
      o: [228,1444,242,1444,277,1385,312,1347,348,1325,384,1265,420,1175,492,1048,527,1013,563,995,600,1022,635,1040,671,1072,706,1078,742,1045,778,960,814,855,849,790,885,735,921,683,957,633,993,650,1028,665,1064,685,1100,698,1136,755,1172,810,1208,855,1244,870,1279,880,1315,880,1350,888,1386,925,1422,955,1458,940,1494,965,1529,995],
      b: [228,1413,242,1413,277,1375,312,1338,348,1325,384,1275,420,1205,492,1092,527,1062,563,1042,600,1060,635,1072,671,1094,706,1096,742,1065,778,985,814,905,849,845,885,790,921,745,957,705,993,712,1028,718,1064,732,1100,735,1136,775,1172,815,1208,855,1244,868,1279,878,1315,878,1350,885,1386,915,1422,940,1458,930,1494,950,1529,978]},
    {ox: 1100, sx: 2.8, oy: 700, sy: 1.96,
      g: [53,345,97,403,142,450,187,500,232,528,276,543,321,610,366,662,410,690,455,640,500,600,544,570,589,561,634,535,679,508,723,515,768,550,813,590,858,640,902,690,947,713,992,748,1037,776,1081,755,1126,770,1171,790,1215,812,1260,848,1305,925,1350,1000,1394,1060,1439,1066,1484,1072,1529,1082],
      o: [53,290,97,335,142,370,187,412,232,440,276,460,321,520,366,560,410,590,455,568,500,552,544,538,589,535,634,523,679,507,723,512,768,535,813,565,858,600,902,635,947,658,992,685,1037,712,1081,705,1126,722,1171,742,1215,762,1260,790,1305,845,1350,905,1394,953,1439,970,1484,985,1529,1002],
      b: [53,270,97,310,142,340,187,377,232,403,276,422,321,475,366,512,410,540,455,530,500,520,544,512,589,512,634,505,679,491,723,496,768,512,813,538,858,570,902,603,947,625,992,650,1037,675,1081,673,1126,690,1171,708,1215,727,1260,755,1305,810,1350,860,1394,900,1439,917,1484,932,1529,952]},
    {ox: 1640, sx: 2.703, oy: 900, sy: 2.24,
      g: [60,782,102,779,146,802,189,778,232,747,275,783,318,757,362,770,405,770,448,785,491,823,534,832,578,905,621,978,664,1020,707,1093,750,1123,793,1127,837,1124,880,1112,923,1110,966,1117,1010,1115,1053,1083,1096,1028,1139,995,1182,960,1225,900,1269,810,1312,690,1355,617,1398,578,1442,538,1485,528,1528,540],
      o: [60,703,102,710,146,734,189,727,232,713,275,740,318,728,362,740,405,745,448,760,491,785,534,795,578,845,621,900,664,935,707,995,750,1027,793,1040,837,1048,880,1050,923,1056,966,1067,1010,1070,1053,1055,1096,1022,1139,1000,1182,980,1225,935,1269,875,1312,790,1355,730,1398,692,1442,652,1485,632,1528,628],
      b: [60,650,102,662,146,687,189,683,232,678,275,703,318,697,362,710,405,715,448,730,491,753,534,765,578,810,621,855,664,890,707,940,750,970,793,987,837,1000,880,1006,923,1016,966,1028,1010,1033,1053,1024,1096,1000,1139,985,1182,966,1225,935,1269,885,1312,815,1355,765,1398,730,1442,695,1485,675,1528,668]},
    {ox: 2200, sx: 1.568, oy: 800, sy: 2.613,
      g: [33,885,58,868,83,810,108,770,133,725,158,716,183,765,208,815,233,870,258,935,283,985,308,1050,333,1107,358,1136,383,1130,408,1100,433,1078,458,1065,484,1063,509,1100,534,1140,559,1165,584,1205,609,1225,634,1232,659,1180,684,1140,709,1110,734,1058,759,1058,784,1054,809,1025,835,960,860,908,885,878,910,835,935,790,960,785,985,780,1010,818,1035,835,1060,850,1085,862,1110,863,1135,785,1160,700,1185,620,1210,595,1235,585,1260,540,1285,548,1310,600,1335,640,1360,656,1385,657,1410,665,1436,655,1461,652,1486,690,1511,720,1537,768,1561,790],
      o: [33,980,58,955,83,905,108,868,133,827,158,812,183,835,208,857,233,888,258,935,283,965,308,1010,333,1050,358,1073,383,1075,408,1067,433,1055,458,1050,484,1050,509,1080,534,1105,559,1125,584,1155,609,1175,634,1183,659,1155,684,1130,709,1110,734,1082,759,1080,784,1075,809,1045,835,1000,860,965,885,942,910,905,935,867,960,855,985,845,1010,860,1035,867,1060,875,1085,880,1110,880,1135,830,1160,765,1185,705,1210,680,1235,665,1260,625,1285,622,1310,650,1335,668,1360,675,1385,675,1410,678,1436,665,1461,665,1486,695,1511,715,1537,745,1561,760],
      b: [33,1022,58,1000,83,960,108,925,133,885,158,866,183,878,208,890,233,915,258,945,283,975,308,1010,333,1040,358,1060,383,1063,408,1058,433,1050,458,1045,484,1047,509,1070,534,1088,559,1103,584,1130,609,1150,634,1162,659,1142,684,1125,709,1110,734,1082,759,1080,784,1075,809,1050,835,1015,860,985,885,962,910,930,935,898,960,887,985,875,1010,885,1035,887,1060,892,1085,893,1110,890,1135,845,1160,795,1185,745,1210,725,1235,708,1260,668,1285,663,1310,682,1335,693,1360,695,1385,693,1410,695,1436,682,1461,682,1486,703,1511,722,1537,745,1561,758]},
    {ox: 3080, sx: 3, oy: 1000, sy: 3,
      g: [347,302,395,365,443,450,491,525,539,585,587,643,635,670,682,620,730,620,778,635,826,690,874,770,922,875,970,990,1018,1075,1066,1200,1114,1330,1162,1460,1215,1560],
      o: [347,262,395,310,443,370,491,428,539,480,587,530,635,562,682,542,730,547,778,567,826,620,874,675,922,750,970,835,1018,910,1066,1020,1114,1130,1162,1235,1210,1320,1258,1425,1306,1510],
      b: [347,265,395,298,443,345,491,400,539,445,587,487,635,514,682,503,730,510,778,530,826,575,874,625,922,695,970,775,1018,835,1066,925,1114,1025,1162,1120,1210,1205,1258,1300,1306,1385,1354,1465,1402,1507]},
    {ox: 3200, sx: 2.45, oy: 1400, sy: 2.063,
      g: [733,325,772,390,811,452,850,458],
      o: [811,275,850,300],
      b: []}
  ];

  function el(tag, attrs, text) {
    var e = document.createElementNS(NS, tag);
    for (var k in attrs) e.setAttribute(k, attrs[k]);
    if (text) e.textContent = text;
    svg.appendChild(e);
    return e;
  }
  function path(d, stroke, w, fill) {
    return el('path', {d: d, stroke: stroke, 'stroke-width': w, fill: fill || 'none'});
  }

  // axes
  var Y114 = 516.5, PER = 20230;
  function py(p) { return Y114 + (1.14 - p) * PER; }
  var grid = '', tick = '';
  for (var v = 1.07; v < 1.1401; v += 0.01) grid += 'M522 ' + py(v) + 'H3712';
  [538, 1225, 1912, 2614.5, 3317.5].forEach(function (x) { grid += 'M' + x + ' 291V1938'; });
  path(grid, '#3f4757', 1.6);
  for (var n = 1; n < 38; n++) {
    if (n % 4 === 0) continue;
    var ty = py(1.07 + 0.0025 * n);
    if (ty < 300) continue;
    var long = n % 2 === 0;
    tick += 'M' + (long ? 509 : 515) + ' ' + ty + 'H522M3712 ' + ty + 'H' + (long ? 3726 : 3720);
  }
  path(tick, '#4a505c', 1.6);

  var clip = document.createElementNS(NS, 'clipPath');
  clip.id = 'axclip';
  var cr = document.createElementNS(NS, 'rect');
  cr.setAttribute('x', 423); cr.setAttribute('y', 291); cr.setAttribute('width', 3386); cr.setAttribute('height', 1645);
  clip.appendChild(cr); svg.appendChild(clip);
  ['1.1400', '1.1300', '1.1200', '1.1100', '1.1000', '1.0900', '1.0800', '1.0700'].forEach(function (t) {
    var y = py(parseFloat(t)) + 8;
    el('text', {x: 518, y: y, 'text-anchor': 'end', 'class': 'ax', 'clip-path': 'url(#axclip)'}, t);
    el('text', {x: 3717, y: y, 'class': 'ax', 'clip-path': 'url(#axclip)'}, t);
  });
  [[1225, '2019/08'], [1912, '2019/10'], [2614.5, '2019/12'], [3317.5, '2020/02']].forEach(function (a) {
    el('text', {x: a[0] - 5, y: 329, 'text-anchor': 'middle', 'class': 'ax'}, a[1]);
  });
  [[538, '2019/06'], [1225, '2019/08'], [1912, '2019/10'], [2614.5, '2019/12'], [3317.5, '2020/02']].forEach(function (a) {
    el('text', {x: a[0] - 5, y: 1954, 'text-anchor': 'middle', 'class': 'ax'}, a[1]);
  });

  // candles
  var COL = {
    B: {wick: '#4f97b5', body: '#7bcff1', fill: '#7bcff1'},
    R: {wick: '#b65a60', body: '#cf6468', fill: 'none'},
    Y: {wick: '#e0e000', body: '#e6e600', fill: 'none'}
  };
  var i = 0;
  SEGS.forEach(function (seg) {
    seg.d.split(' ').forEach(function (c) {
      var t = c.charAt(0), v = c.slice(1).split(',').map(function (n) { return seg.o + Number(n) / seg.s; });
      var x = X0 + DX * i, col = COL[t];
      path('M' + x + ' ' + v[0] + 'V' + v[1] + 'M' + x + ' ' + v[2] + 'V' + v[3], col.wick, 1.7);
      el('rect', {x: x - 6.5, y: v[1], width: 13, height: Math.max(v[2] - v[1], 1.5), fill: col.fill, stroke: col.body, 'stroke-width': 1.7, rx: 0.5});
      i++;
    });
  });

  // moving averages
  function line(key, color) {
    var pts = [], last = -1;
    LSEG.forEach(function (s) {
      var a = s[key];
      for (var k = 0; k < a.length; k += 2) {
        var x = s.ox + a[k] / s.sx, y = s.oy + a[k + 1] / s.sy;
        if (x > last) { pts.push(x.toFixed(1) + ',' + y.toFixed(1)); last = x; }
      }
    });
    el('polyline', {points: pts.join(' '), fill: 'none', stroke: color, 'stroke-width': 1.6, 'stroke-linejoin': 'round'});
  }
  line('g', '#7fb24a');
  line('o', '#cf7a36');
  line('b', '#4c4cc8');
})();
```
